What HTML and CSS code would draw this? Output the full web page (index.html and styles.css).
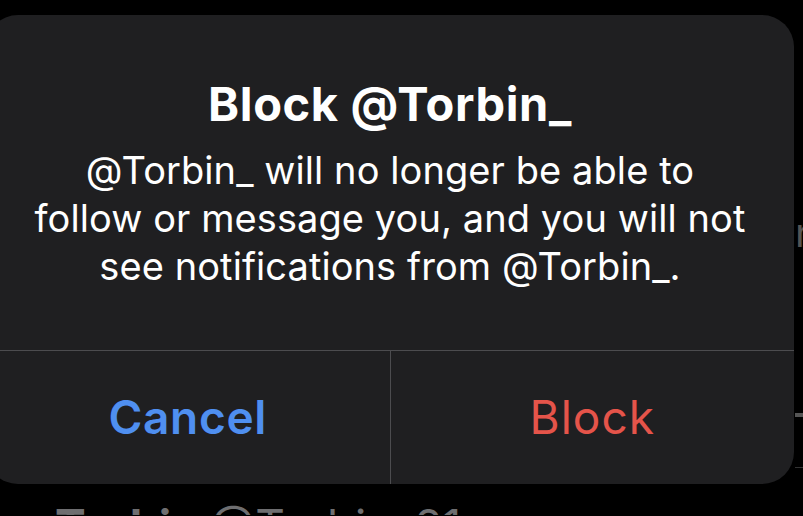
FILE: index.html
```html
<!DOCTYPE html>
<html lang="en">
<head>
  <meta charset="UTF-8" />
  <meta name="viewport" content="width=device-width, initial-scale=1.0" />
  <title>Block @Torbin_</title>
  <link rel="stylesheet" href="styles.css">
</head>
<body>
  <div class="backdrop">
    <span class="peek-letter">n</span>
    <span class="peek-rule"></span>
    <span class="peek-line"></span>
  </div>

  <div class="alert">
    <div class="alert-body">
      <h2>Block @Torbin_</h2>
      <p>@Torbin_ will no longer be able to<br>follow or message you, and you will not<br>see notifications from @Torbin_.</p>
    </div>
    <div class="alert-actions">
      <button class="action cancel">Cancel</button>
      <button class="action destructive">Block</button>
    </div>
  </div>

  <div class="behind-name">Torbin <span>@Torbin_21</span></div>
</body>
</html>
```

FILE: styles.css
```css
:root {
  --bg: #000;
  --alert-bg: #1f1f21;
  --divider: #4c4c4f;
  --text: #fff;
  --blue: #4f8ff0;
  --red: #e5544a;
  --muted: #6e6e70;
}

html {
  overflow: hidden;
}

body {
  margin: 0;
  padding: 0;
  background: var(--bg);
  font-family: 'Inter', 'Liberation Sans', sans-serif;
  width: 803px;
  height: 516px;
  overflow: hidden;
  position: relative;
}

.alert {
  position: relative;
  z-index: 1;
  margin: 15px 0 0 -14px;
  width: 808px;
  height: 469px;
  background: var(--alert-bg);
  border-radius: 32px;
  display: flex;
  flex-direction: column;
  overflow: hidden;
}

.alert-body {
  height: 336px;
  box-sizing: border-box;
  padding: 61px 10px 0;
  text-align: center;
  color: var(--text);
  border-bottom: 1px solid var(--divider);
}

.alert-body h2 {
  margin: 0 0 14px;
  font-size: 47px;
  font-weight: 700;
  line-height: 56px;
  letter-spacing: 0.6px;
}

.alert-body p {
  margin: 0;
  font-size: 38px;
  font-weight: 400;
  line-height: 48px;
  letter-spacing: 0.08px;
  white-space: nowrap;
}

.alert-actions {
  flex: 1;
  display: flex;
}

.action {
  flex: 1;
  background: none;
  border: none;
  font-family: inherit;
  font-size: 46px;
  line-height: 56px;
  padding: 0 0 2px;
  cursor: pointer;
}

.action.cancel {
  color: var(--blue);
  font-weight: 600;
  letter-spacing: 0.7px;
  border-right: 1px solid var(--divider);
}

.action.destructive {
  color: var(--red);
  font-weight: 400;
  letter-spacing: 1px;
}

/* bits of the screen underneath the alert */
.peek-letter {
  position: absolute;
  left: 795px;
  top: 208px;
  font-size: 40px;
  color: #555;
}

.peek-rule {
  position: absolute;
  left: 795px;
  top: 413px;
  width: 10px;
  height: 4px;
  background: #555;
}

.peek-line {
  position: absolute;
  left: 795px;
  top: 467px;
  width: 10px;
  height: 1px;
  background: #333;
}

.behind-name {
  margin: 14px 0 0 55px;
  height: 17px;
  overflow: hidden;
  font-size: 46px;
  line-height: 56px;
  font-weight: 700;
  color: var(--muted);
  white-space: nowrap;
}

.behind-name span {
  font-weight: 400;
}
```
